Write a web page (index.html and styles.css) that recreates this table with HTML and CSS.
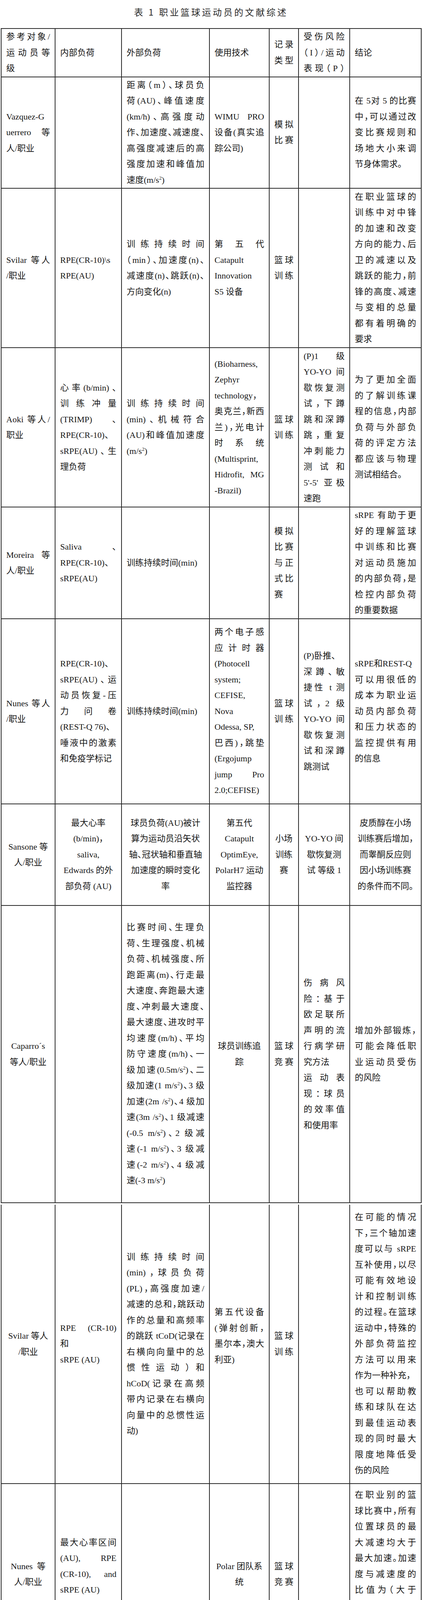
FILE: index.html
```html
<!DOCTYPE html>
<html lang="zh-CN">
<head>
<meta charset="utf-8">
<title>表 1 职业篮球运动员的文献综述</title>
<link rel="stylesheet" href="styles.css">
</head>
<body>
<div class="title">表 1 职业篮球运动员的文献综述</div>

<table class="tbl">
<colgroup><col class="k1"><col class="k2"><col class="k3"><col class="k4"><col class="k5"><col class="k6"><col class="k7"></colgroup>
<tr class="r-hd">
<td><span class="j">参考对象/</span><span class="j">运动员等</span><span class="l">级</span></td>
<td><span class="l">内部负荷</span></td>
<td><span class="l">外部负荷</span></td>
<td><span class="l">使用技术</span></td>
<td><span class="j">记录</span><span class="j">类型</span></td>
<td><span class="j">受伤风险</span><span class="j">（I）/运动</span><span class="j">表现（P）</span></td>
<td><span class="l">结论</span></td>
</tr>
<tr class="r-vaz">
<td><span class="l">Vazquez-G</span><span class="j">uerrero 等</span><span class="l">人/职业</span></td>
<td></td>
<td><span class="j">距离（m）、球员负</span><span class="j">荷(AU)、峰值速度</span><span class="j">(km/h)、高强度动</span><span class="j">作、加速度、减速度、</span><span class="j">高强度减速后的高</span><span class="j">强度加速和峰值加</span><span class="l">速度(m/s<sup class="sup">2</sup>)</span></td>
<td><span class="j">WIMU PRO</span><span class="j">设备(真实追</span><span class="l">踪公司)</span></td>
<td><span class="j">模拟</span><span class="j">比赛</span></td>
<td></td>
<td><span class="j">在 5对 5 的比赛</span><span class="j">中，可以通过改</span><span class="j">变比赛规则和</span><span class="j">场地大小来调</span><span class="l">节身体需求。</span></td>
</tr>
<tr class="r-svi">
<td><span class="j">Svilar 等人</span><span class="l">/职业</span></td>
<td><span class="l">RPE(CR-10)\s</span><span class="l">RPE(AU)</span></td>
<td><span class="j">训练持续时间</span><span class="j">（min）、加速度(n)、</span><span class="j">减速度(n)、跳跃(n)、</span><span class="l">方向变化(n)</span></td>
<td><span class="j">第 五 代</span><span class="l">Catapult</span><span class="l">Innovation</span><span class="l">S5 设备</span></td>
<td><span class="j">篮球</span><span class="j">训练</span></td>
<td></td>
<td><span class="j">在职业篮球的</span><span class="j">训练中对中锋</span><span class="j">的加速和改变</span><span class="j">方向的能力、后</span><span class="j">卫的减速以及</span><span class="j">跳跃的能力，前</span><span class="j">锋的高度、减速</span><span class="j">与变相的总量</span><span class="j">都有着明确的</span><span class="l">要求</span></td>
</tr>
<tr class="r-aok">
<td><span class="j">Aoki 等人/</span><span class="l">职业</span></td>
<td><span class="j">心率(b/min)、</span><span class="j">训练冲量</span><span class="j">(TRIMP) 、</span><span class="l">RPE(CR-10)、</span><span class="j">sRPE(AU)、生</span><span class="l">理负荷</span></td>
<td><span class="j">训练持续时间</span><span class="j">(min)、机械符合</span><span class="j">(AU)和峰值加速度</span><span class="l">(m/s<sup class="sup">2</sup>)</span></td>
<td><span class="l">(Bioharness,</span><span class="l">Zephyr</span><span class="l">technology，</span><span class="j">奥克兰，新西</span><span class="j">兰)，光电计</span><span class="j">时 系 统</span><span class="l">(Multisprint,</span><span class="j">Hidrofit, MG</span><span class="l">-Brazil)</span></td>
<td><span class="j">篮球</span><span class="j">训练</span></td>
<td><span class="j">(P)1 级</span><span class="j">YO-YO 间</span><span class="j">歇恢复测</span><span class="j">试，下蹲</span><span class="j">跳和深蹲</span><span class="j">跳，重复</span><span class="j">冲刺能力</span><span class="j">测 试 和</span><span class="j">5'-5' 亚极</span><span class="l">速跑</span></td>
<td><span class="j">为了更加全面</span><span class="j">的了解训练课</span><span class="j">程的信息，内部</span><span class="j">负荷与外部负</span><span class="j">荷的评定方法</span><span class="j">都应该与物理</span><span class="l">测试相结合。</span></td>
</tr>
<tr class="r-mor">
<td><span class="j">Moreira 等</span><span class="l">人/职业</span></td>
<td><span class="j">Saliva 、</span><span class="l">RPE(CR-10)、</span><span class="l">sRPE(AU)</span></td>
<td><span class="l">训练持续时间(min)</span></td>
<td></td>
<td><span class="j">模拟</span><span class="j">比赛</span><span class="j">与正</span><span class="j">式比</span><span class="l">赛</span></td>
<td></td>
<td><span class="j">sRPE 有助于更</span><span class="j">好的理解篮球</span><span class="j">中训练和比赛</span><span class="j">对运动员施加</span><span class="j">的内部负荷，是</span><span class="j">检控内部负荷</span><span class="l">的重要数据</span></td>
</tr>
<tr class="r-nun">
<td><span class="j">Nunes 等人</span><span class="l">/职业</span></td>
<td><span class="l">RPE(CR-10)、</span><span class="j">sRPE(AU)、运</span><span class="j">动员恢复-压</span><span class="j">力 问 卷</span><span class="l">(REST-Q 76)、</span><span class="j">唾液中的激素</span><span class="l">和免疫学标记</span></td>
<td><span class="l">训练持续时间(min)</span></td>
<td><span class="j">两个电子感</span><span class="j">应计时器</span><span class="l">(Photocell</span><span class="l">system;</span><span class="l">CEFISE,</span><span class="l">Nova</span><span class="l">Odessa, SP,</span><span class="j">巴西)，跳垫</span><span class="l">(Ergojump</span><span class="j">jump Pro</span><span class="l">2.0;CEFISE)</span></td>
<td><span class="j">篮球</span><span class="j">训练</span></td>
<td><span class="l">(P)卧推、</span><span class="j">深蹲、敏</span><span class="j">捷性 t 测</span><span class="j">试，2 级</span><span class="j">YO-YO 间</span><span class="j">歇恢复测</span><span class="j">试和深蹲</span><span class="l">跳测试</span></td>
<td><span class="l">sRPE和REST-Q</span><span class="j">可以用很低的</span><span class="j">成本为职业运</span><span class="j">动员内部负荷</span><span class="j">和压力状态的</span><span class="j">监控提供有用</span><span class="l">的信息</span></td>
</tr>
<tr class="r-san">
<td class="c"><span class="l">Sansone 等</span><span class="l">人/职业</span></td>
<td class="c"><span class="l">最大心率</span><span class="l">(b/min)，</span><span class="l">saliva,</span><span class="l">Edwards 的外</span><span class="l">部负荷 (AU)</span></td>
<td class="c"><span class="l">球员负荷(AU)被计</span><span class="l">算为运动员沿矢状</span><span class="l">轴、冠状轴和垂直轴</span><span class="l">加速度的瞬时变化</span><span class="l">率</span></td>
<td class="c"><span class="l">第五代</span><span class="l">Catapult</span><span class="l">OptimEye,</span><span class="l">PolarH7 运动</span><span class="l">监控器</span></td>
<td class="c"><span class="l">小场</span><span class="l">训练</span><span class="l">赛</span></td>
<td class="c"><span class="l">YO-YO 间</span><span class="l">歇恢复测</span><span class="l">试 等级 1</span></td>
<td class="c"><span class="l">皮质醇在小场</span><span class="l">训练赛后增加，</span><span class="l">而睾酮反应则</span><span class="l">因小场训练赛</span><span class="l">的条件而不同。</span></td>
</tr>
<tr class="r-cap">
<td class="c"><span class="l">Caparro´s</span><span class="l">等人/职业</span></td>
<td></td>
<td><span class="j">比赛时间、生理负</span><span class="j">荷、生理强度、机械</span><span class="j">负荷、机械强度、所</span><span class="j">跑距离(m)、行走最</span><span class="j">大速度、奔跑最大速</span><span class="j">度、冲刺最大速度、</span><span class="j">最大速度、进攻时平</span><span class="j">均速度(m/h)、平均</span><span class="j">防守速度(m/h)、一</span><span class="j">级加速(0.5m/s<sup class="sup">2</sup>)、二</span><span class="j">级加速(1 m/s<sup class="sup">2</sup>)、3 级</span><span class="j">加速(2m /s<sup class="sup">2</sup>)、4 级加</span><span class="j">速(3m /s<sup class="sup">2</sup>)、1 级减速</span><span class="j">(-0.5 m/s<sup class="sup">2</sup>)、2 级减</span><span class="j">速(-1 m/s<sup class="sup">2</sup>)、3 级减</span><span class="j">速(-2 m/s<sup class="sup">2</sup>)、4 级减</span><span class="l">速(-3 m/s<sup class="sup">2</sup>)</span></td>
<td class="c"><span class="l">球员训练追</span><span class="l">踪</span></td>
<td><span class="j">篮球</span><span class="j">竞赛</span></td>
<td><span class="j">伤病风</span><span class="j">险：基于</span><span class="j">欧足联所</span><span class="j">声明的流</span><span class="j">行病学研</span><span class="l">究方法</span><span class="j">运动表</span><span class="j">现：球员</span><span class="j">的效率值</span><span class="l">和使用率</span></td>
<td><span class="j">增加外部锻炼，</span><span class="j">可能会降低职</span><span class="j">业运动员受伤</span><span class="l">的风险</span></td>
</tr>
</table>

<table class="tbl cont">
<colgroup><col class="k1"><col class="k2"><col class="k3"><col class="k4"><col class="k5"><col class="k6"><col class="k7"></colgroup>
<tr class="r-sv2">
<td class="c"><span class="l">Svilar 等人</span><span class="l">/职业</span></td>
<td><span class="j">RPE (CR-10)</span><span class="l">和</span><span class="l">sRPE (AU)</span></td>
<td><span class="j">训练持续时间</span><span class="j">(min)，球员负荷</span><span class="j">(PL)，高强度加速/</span><span class="j">减速的总和，跳跃动</span><span class="j">作的总量和高频率</span><span class="j">的跳跃 tCoD(记录在</span><span class="j">右横向向量中的总</span><span class="j">惯性运动）和</span><span class="j">hCoD(记录在高频</span><span class="j">带内记录在右横向</span><span class="j">向量中的总惯性运</span><span class="l">动)</span></td>
<td><span class="j">第五代设备</span><span class="j">(弹射创新，</span><span class="j">墨尔本，澳大</span><span class="l">利亚)</span><span class="l">&nbsp;</span></td>
<td><span class="j">篮球</span><span class="j">训练</span></td>
<td></td>
<td><span class="j">在可能的情况</span><span class="j">下，三个轴加速</span><span class="j">度可以与 sRPE</span><span class="j">互补使用，以尽</span><span class="j">可能有效地设</span><span class="j">计和控制训练</span><span class="j">的过程。在篮球</span><span class="j">运动中，特殊的</span><span class="j">外部负荷监控</span><span class="j">方法可以用来</span><span class="l">作为一种补充，</span><span class="j">也可以帮助教</span><span class="j">练和球队在达</span><span class="j">到最佳运动表</span><span class="j">现的同时最大</span><span class="j">限度地降低受</span><span class="l">伤的风险</span></td>
</tr>
<tr class="r-nu2">
<td class="c"><span class="l">Nunes&nbsp;&nbsp;等</span><span class="l">人/职业</span></td>
<td><span class="j">最大心率区间</span><span class="j">(AU), RPE</span><span class="j">(CR-10), and</span><span class="l">sRPE (AU)</span><span class="l">&nbsp;</span></td>
<td></td>
<td class="c"><span class="l">Polar 团队系</span><span class="l">统</span></td>
<td><span class="j">篮球</span><span class="j">竞赛</span></td>
<td></td>
<td><span class="j">在职业别的篮</span><span class="j">球比赛中，所有</span><span class="j">位置球员的最</span><span class="j">大减速均大于</span><span class="j">最大加速。加速</span><span class="j">度与减速度的</span><span class="j">比值为（大于</span><span class="j">3m/ s<sup class="sup">2</sup>)其中外线</span><span class="j">球员明显低于</span><span class="j">大前锋和中锋</span><span class="l">球员。</span></td>
</tr>
<tr class="r-fre">
<td class="c"><span class="l">Freitas 等</span><span class="l">人/职业</span></td>
<td><span class="l">RPE (CR-10)，</span><span class="l">sRPE (AU),</span><span class="l">DALDA, 和</span><span class="l">WURSS-21</span></td>
<td></td>
<td></td>
<td><span class="j">篮球</span><span class="j">训练</span></td>
<td></td>
<td><span class="j">在竞赛期间，随</span><span class="j">着训练的内部</span><span class="j">负荷下降，会使</span><span class="j">抗压力能力下</span><span class="j">降和上呼吸道</span><span class="j">感染严重程度</span><span class="l">的增加。</span></td>
</tr>
<tr class="r-arr sans">
<td><span class="j">Arruda 等</span><span class="l">人/职业</span></td>
<td><span class="j">RPE (CR-10)</span><span class="l">和 sRPE (AU)</span></td>
<td></td>
<td></td>
<td><span class="j">篮球</span><span class="j">训练</span></td>
<td></td>
<td><span class="j"><span class="red">AD 和 CIT-A</span> 之</span><span class="j">间较高的相关</span><span class="j">系数表明，赛季</span><span class="j">初预测的难度</span><span class="j">应随着赛季的</span><span class="l">进行而更新。</span></td>
</tr>
</table>

<table class="tbl cont">
<colgroup><col class="k1"><col class="k2"><col class="k3"><col class="k4"><col class="k5"><col class="k6"><col class="k7"></colgroup>
<tr class="r-oli">
<td><span class="l">olivera-</span><span class="j">da-silva 等</span><span class="l">人/职业</span><span class="l">&nbsp;</span></td>
<td></td>
<td><span class="j">低强度运动包括步</span><span class="j">行(&lt;6.0 km/h)，慢</span><span class="j">跑(6.0-12.0km/h)，</span><span class="l">跑动(12.1-18km/h)。</span><span class="j">低强度滑步(n)，中</span><span class="l">等强度滑步(n)。</span><span class="j">高强度动作包括高</span><span class="j">强度位移(18.1-24.0</span><span class="j">km/h)和冲刺(大于</span><span class="j">24.1 km/h)，高强度</span><span class="l">滑步(n)，跳跃(n)</span><span class="j">其他变量包括总上</span><span class="j">场时间（Total</span><span class="j">Time)、实时上场时</span><span class="j">间(Real Time)和实</span><span class="j">时上场时间占总上</span><span class="j">场时间的百分比</span><span class="l">(TR/TT)</span></td>
<td><span class="j">由国际篮联</span><span class="j">提供录像，并</span><span class="j">存储在笔记</span><span class="j">本电脑上。逐</span><span class="j">帧分析录像，</span><span class="l">精度为 0.04 s</span><span class="l">&nbsp;</span></td>
<td><span class="j">篮球</span><span class="j">竞赛</span></td>
<td></td>
<td><span class="j">使用特定的篮</span><span class="j">球动作作为一</span><span class="j">种训练手段时，</span><span class="j">为了在强度和</span><span class="j">数量上适应实</span><span class="j">际需求，需要保</span><span class="j">证刺激的特异</span><span class="l">性</span><span class="l">&nbsp;</span></td>
</tr>
<tr class="r-sch">
<td><span class="l">Schelling</span><span class="j">和 Torres/</span><span class="l">职业</span><span class="l">&nbsp;</span></td>
<td></td>
<td><span class="l">加速数据</span><span class="l ind">(AL/min)</span></td>
<td><span class="j">三轴加速度</span><span class="l">计</span><span class="j">(X8-mini;16</span><span class="j">位；墨西哥湾</span><span class="j">沿岸数据概</span><span class="l">念)</span></td>
<td><span class="j">篮球</span><span class="j">训练</span></td>
<td></td>
<td><span class="j">三轴加速度计</span><span class="j">测量的全场 3v3</span><span class="j">和 5v5 显示出最</span><span class="l">高的外部负荷。</span><span class="j">球员越小，加速</span><span class="l">度负荷越高</span><span class="l">&nbsp;</span></td>
</tr>
<tr class="r-ca2">
<td class="c"><span class="l">Caparro´s</span><span class="l">等人</span></td>
<td></td>
<td class="c"><span class="l">曝光时间</span></td>
<td></td>
<td class="c"><span class="l">篮球</span><span class="l">训练</span><span class="l">和比</span><span class="l">赛</span></td>
<td><span class="j">受伤风</span><span class="j">险：基于</span><span class="j">欧足联所</span><span class="j">声明的流</span><span class="j">行病学研</span><span class="l">究方法</span><span class="j">运动表</span><span class="j">现：从球</span><span class="j">队和球员</span><span class="j">的官方比</span><span class="j">赛统计数</span><span class="j">据中收集</span><span class="j">的表现统</span><span class="j">计 数 据</span><span class="j">是。每场</span><span class="j">比赛结束</span><span class="j">时的官方</span><span class="j">排 名</span><span class="l">(RKG)</span></td>
<td><span class="j">尽管增加训练</span><span class="j">和比赛时间可</span><span class="j">以提高团队表</span><span class="j">现，但是这也增</span><span class="j">加了受伤的数</span><span class="j">量。但是受伤率</span><span class="j">的增加并不会</span><span class="j">引起团队表现</span><span class="l">不佳。</span><span class="l">&nbsp;</span></td>
</tr>
</table>
</body>
</html>
```

FILE: styles.css
```css
html, body {
  margin: 0;
  padding: 0;
  background: #ffffff;
}

body {
  width: 1080px;
  color: #151515;
}

.title {
  font-family: "Noto Sans CJK SC", "Noto Sans", sans-serif;
  font-size: 23px;
  letter-spacing: 4.5px;
  line-height: 60px;
  height: 60px;
  text-align: center;
  color: #2a2a2a;
  margin: 0 0 12px 0;
}

.tbl {
  border-collapse: collapse;
  table-layout: fixed;
  width: 1077px;
  margin-left: 2px;
  font-family: "Liberation Serif", "Noto Sans CJK SC", serif;
  font-size: 22px;
  line-height: 40.5px;
  font-feature-settings: "halt";
  color: #151515;
}

.tbl.cont {
  margin-top: 4px;
}

.tbl.cont tr:first-child td {
  border-top-style: hidden;
}

.tbl td {
  border: 2px solid #2a2a2a;
  padding: 0 12px;
  vertical-align: middle;
  text-align: left;
}

.k1 { width: 138px; }
.k2 { width: 170px; }
.k3 { width: 225px; }
.k4 { width: 153px; }
.k5 { width: 75px; }
.k6 { width: 131px; }
.k7 { width: 183px; }

.j,
.l {
  display: block;
}

.j {
  text-align: justify;
  text-align-last: justify;
}

.l {
  text-align: left;
}

.c .l {
  text-align: center;
}

.ind {
  padding-left: 12px;
}

.sup {
  font-size: 13px;
  line-height: 0;
  vertical-align: 8px;
}

.sans {
  font-family: "Liberation Sans", "Noto Sans CJK SC", sans-serif;
}

.red {
  color: #e3323b;
}

/* row heights (border centre to border centre in the printed table) */
.r-hd  { height: 123px; }
.r-vaz { height: 284px; }
.r-svi { height: 408px; }
.r-aok { height: 408px; }
.r-mor { height: 286px; }
.r-nun { height: 474px; }
.r-san { height: 260px; }
.r-cap { height: 761px; }
.r-sv2 { height: 714px; }
.r-nu2 { height: 464px; }
.r-fre { height: 318px; }
.r-arr { height: 277px; }
.r-oli { height: 730px; }
.r-sch { height: 283px; }
.r-ca2 { height: 770px; }
```
